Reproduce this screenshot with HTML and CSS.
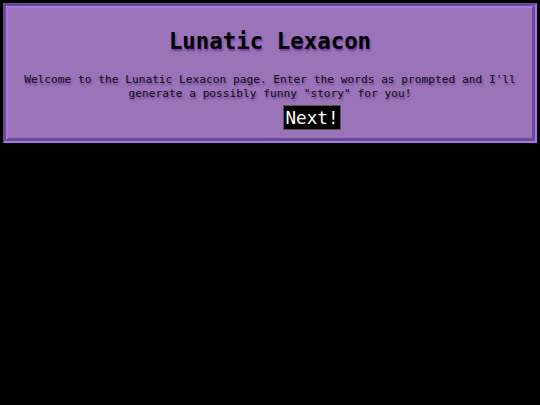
FILE: index.html
```html
<!DOCTYPE html>
<html>
<head>
<meta charset="utf-8">
<title>Lunatic Lexacon</title>
<link rel="stylesheet" href="styles.css">
</head>
<body>
<div class="panel">
  <h1 class="title">Lunatic Lexacon</h1>
  <p class="intro">Welcome to the Lunatic Lexacon page. Enter the words as prompted and I'll generate a possibly funny "story" for you!</p>
  <div class="actions"><button class="next">Next!</button></div>
</div>
</body>
</html>
```
FILE: styles.css
```css
html, body {
  margin: 0;
  padding: 0;
  background: #000;
}
body {
  padding: 3px;
  font-family: "DejaVu Sans Mono", monospace;
}
.panel {
  background: #9a73b8;
  border: 5px groove #a878e8;
  padding: 0 12px 8px;
  text-align: center;
}
.title {
  margin: 0;
  padding-top: 20px;
  font-size: 22.4px;
  font-weight: bold;
  color: #000;
  text-shadow: 1px 2px 2px #6a3f98;
}
.intro {
  margin: 19px 0 4px;
  font-size: 11.2px;
  line-height: 14px;
  color: #111;
  text-shadow: 1px 2px 2px #6a3f98;
}
.actions {
  padding-left: 84px;
}
.next {
  font-family: "DejaVu Sans Mono", monospace;
  font-size: 17.6px;
  background: #000;
  color: #fff;
  border: 1px solid #555;
  padding: 0 2px;
  height: 25px;
}
```
